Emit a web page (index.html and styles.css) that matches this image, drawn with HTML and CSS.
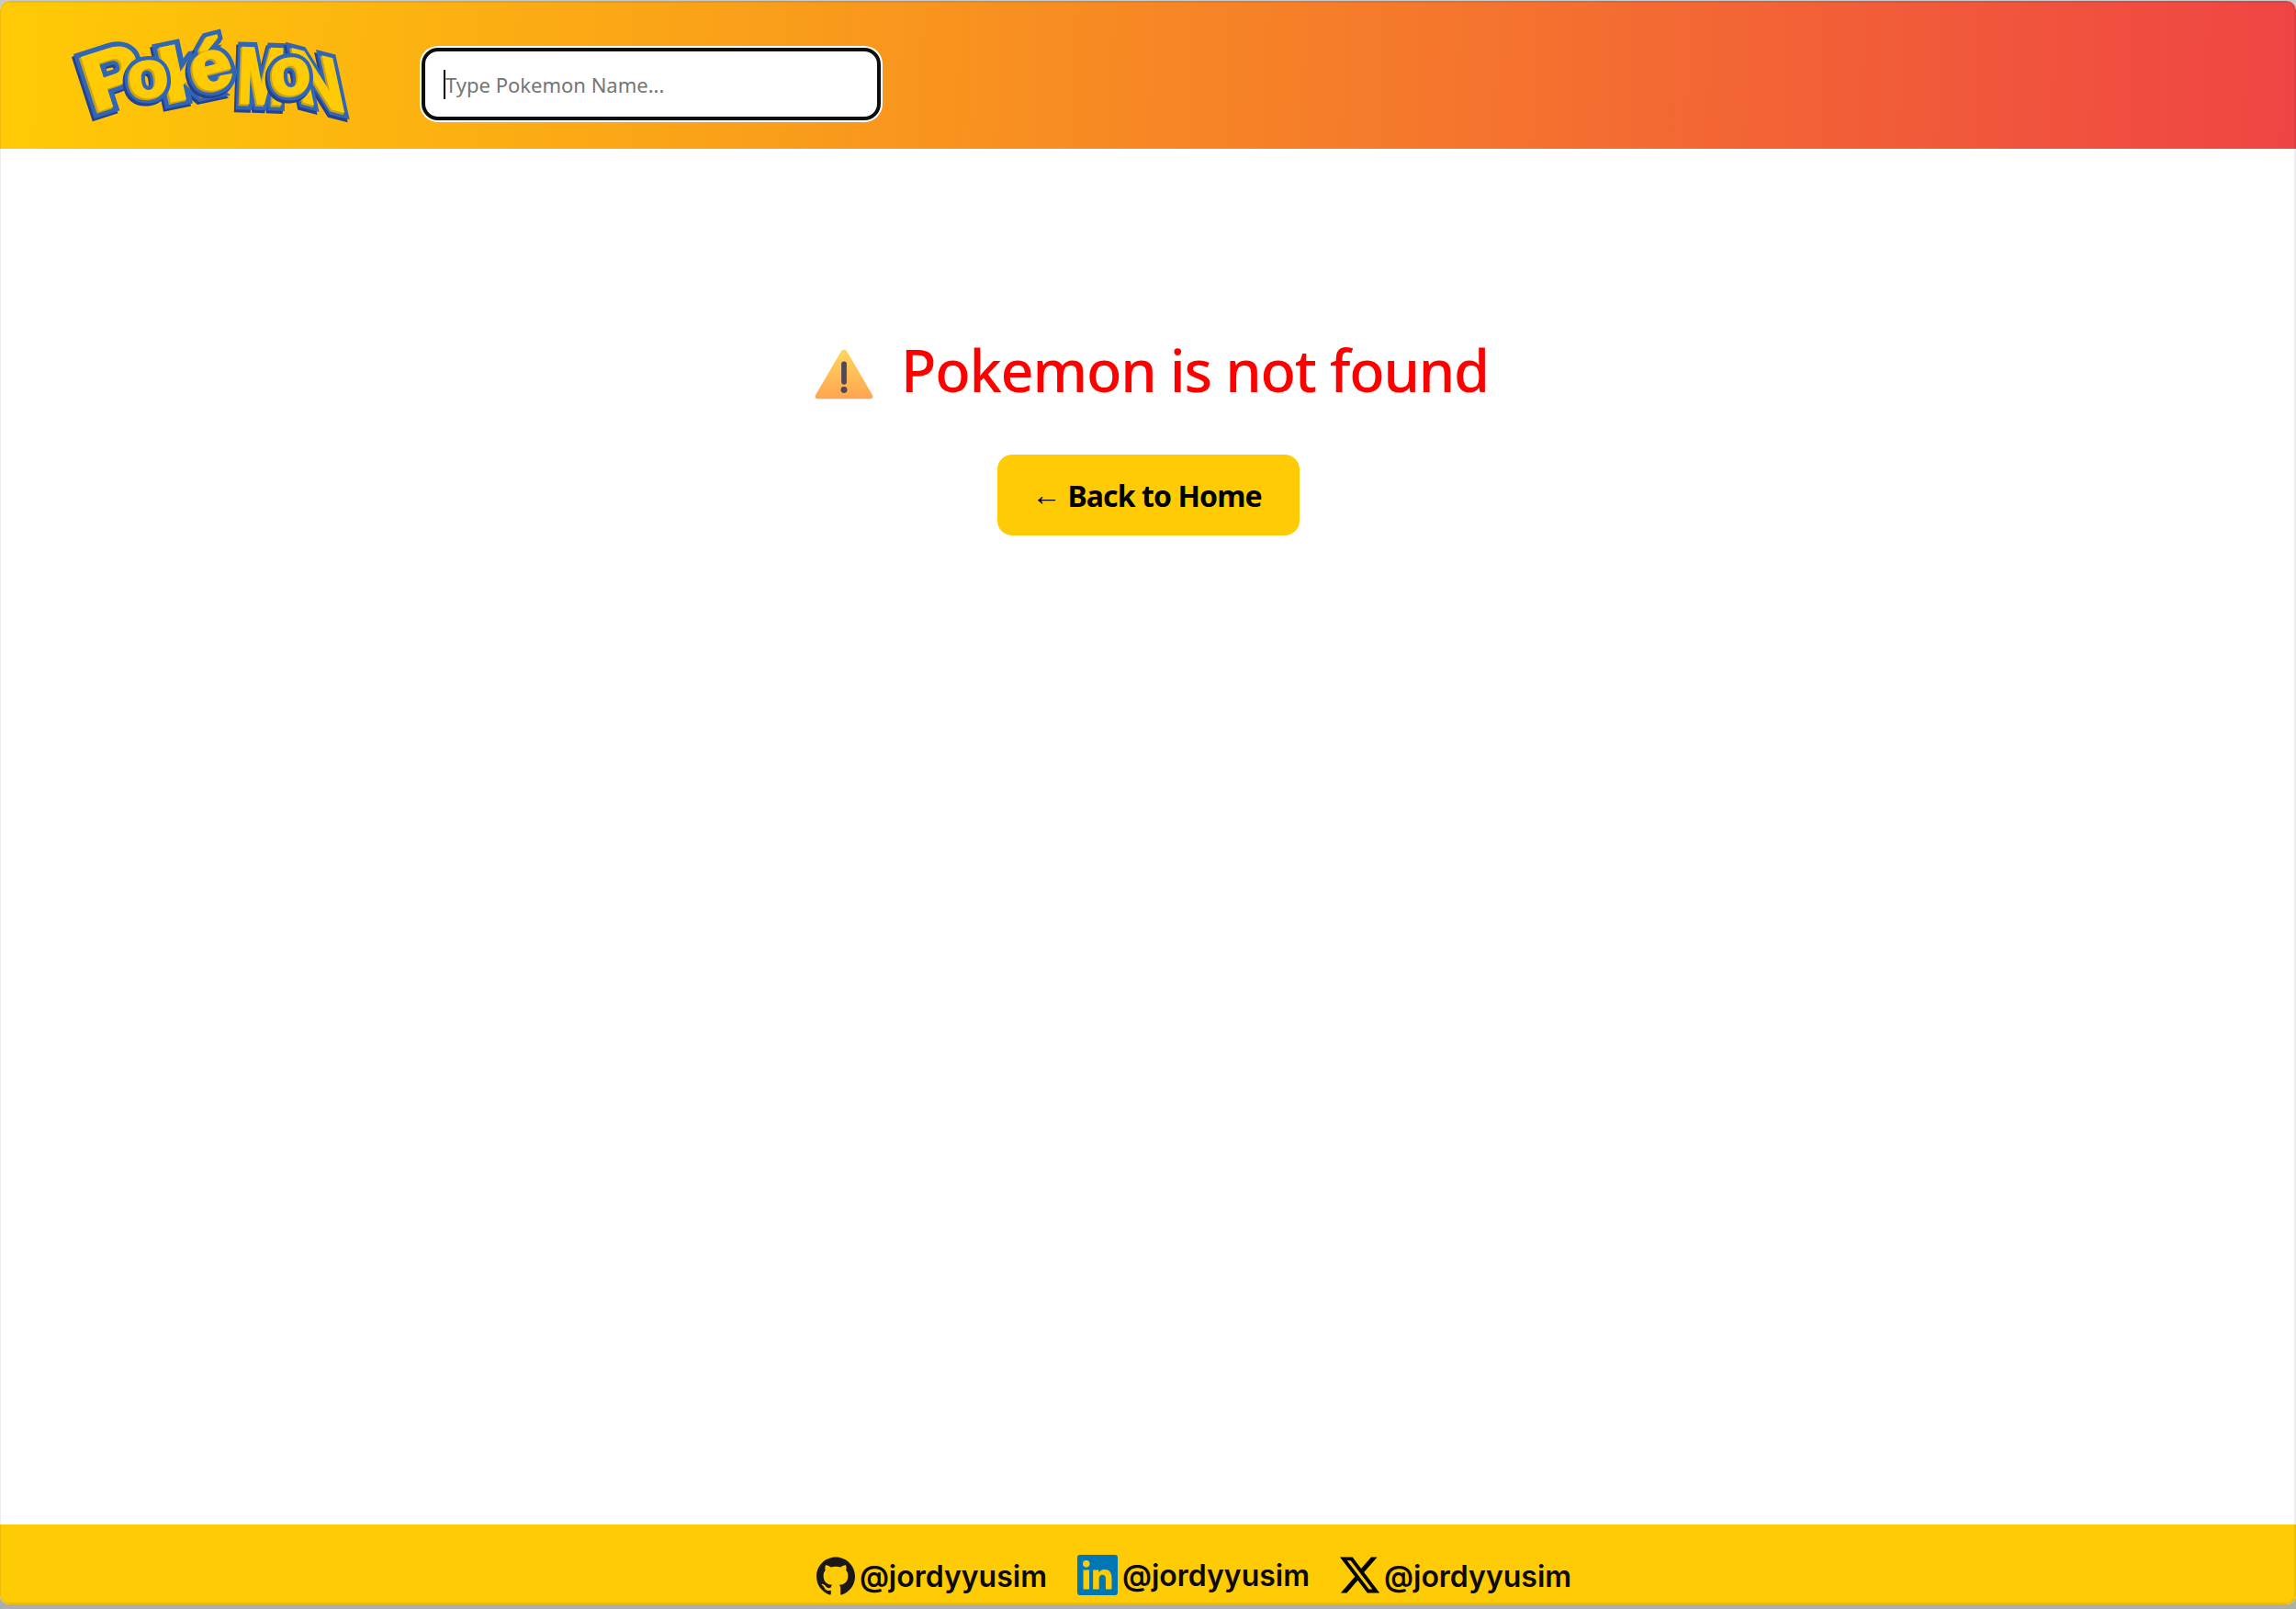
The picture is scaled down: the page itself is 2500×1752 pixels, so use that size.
FILE: index.html
```html
<!DOCTYPE html>
<html lang="en">
<head>
<meta charset="utf-8">
<title>Pokemon is not found</title>
<link rel="stylesheet" href="styles.css">
</head>
<body>
<div class="app">
  <header class="header">
    <svg class="logo" viewBox="0 0 300 100" aria-label="Pokémon" role="img">
      <defs>
        <text id="lp" transform="translate(22 90) rotate(-18) scale(1.3 1.2)" class="l">P</text>
        <text id="lo" transform="translate(61 76) rotate(-6)" class="l">o</text>
        <text id="lk" transform="translate(100 80) rotate(-12) scale(1.4 1.12)" class="l">k</text>
        <text id="le" transform="translate(133 70) rotate(-14) scale(1.12 1.05)" class="l">é</text>
        <text id="lm" transform="translate(178 80) rotate(2) scale(.85 1.2)" class="l">M</text>
        <text id="ln" transform="matrix(1 .25 .25 1.15 246 78)" class="l">N</text>
        <text id="lq" transform="translate(216 73) rotate(-6)" class="l">o</text>
      </defs>
      <g><use href="#lp" class="logo-edge"></use><use href="#lp" class="logo-gold"></use><use href="#lp" class="logo-fill"></use></g>
      <g><use href="#lk" class="logo-edge"></use><use href="#lk" class="logo-gold"></use><use href="#lk" class="logo-fill"></use></g>
      <g><use href="#lo" class="logo-edge"></use><use href="#lo" class="logo-gold"></use><use href="#lo" class="logo-fill"></use></g>
      <g><use href="#lm" class="logo-edge"></use><use href="#lm" class="logo-gold"></use><use href="#lm" class="logo-fill"></use></g>
      <g><use href="#le" class="logo-edge"></use><use href="#le" class="logo-gold"></use><use href="#le" class="logo-fill"></use></g>
      <g><use href="#ln" class="logo-edge"></use><use href="#ln" class="logo-gold"></use><use href="#ln" class="logo-fill"></use></g>
      <g><use href="#lq" class="logo-edge"></use><use href="#lq" class="logo-gold"></use><use href="#lq" class="logo-fill"></use></g>
    </svg>
    <div class="search">
      <input class="search-input" type="text" placeholder="Type Pokemon Name...">
      <span class="caret"></span>
    </div>
  </header>

  <main class="main">
    <h1 class="error-title">
      <svg class="warn" viewBox="0 0 66 56" aria-hidden="true">
        <defs>
          <linearGradient id="warnFill" x1="0" y1="0" x2="0" y2="1">
            <stop offset="0" stop-color="#ffd65c"></stop>
            <stop offset="1" stop-color="#ffa552"></stop>
          </linearGradient>
        </defs>
        <path d="M33 1 C35 1 36 2 37 4 L65 52 C66 54 65 56 63 56 L3 56 C1 56 0 54 1 52 L29 4 C30 2 31 1 33 1 Z" fill="url(#warnFill)"></path>
        <rect x="30" y="14" width="6" height="26" rx="3" fill="#50495a"></rect>
        <circle cx="33" cy="46" r="3.6" fill="#50495a"></circle>
      </svg>
      <span>Pokemon is not found</span>
    </h1>
    <a class="home-btn" href="#"><span class="arrow">←</span> Back to Home</a>
  </main>

  <footer class="footer">
    <a class="social" href="#">
      <svg class="social-icon icon-gh" viewBox="0 0 24 24" aria-hidden="true"><path fill="#1b1817" d="M12 .297c-6.63 0-12 5.373-12 12 0 5.303 3.438 9.8 8.205 11.385.6.113.82-.258.82-.577 0-.285-.01-1.04-.015-2.04-3.338.724-4.042-1.61-4.042-1.61C4.422 18.07 3.633 17.7 3.633 17.7c-1.087-.744.084-.729.084-.729 1.205.084 1.838 1.236 1.838 1.236 1.07 1.835 2.809 1.305 3.495.998.108-.776.417-1.305.76-1.605-2.665-.3-5.466-1.332-5.466-5.93 0-1.31.465-2.38 1.235-3.22-.135-.303-.54-1.523.105-3.176 0 0 1.005-.322 3.3 1.23.96-.267 1.98-.399 3-.405 1.02.006 2.04.138 3 .405 2.28-1.552 3.285-1.23 3.285-1.23.645 1.653.24 2.873.12 3.176.765.84 1.23 1.91 1.23 3.22 0 4.61-2.805 5.625-5.475 5.92.42.36.81 1.096.81 2.22 0 1.606-.015 2.896-.03 3.286 0 .315.21.69.825.57C20.565 22.092 24 17.592 24 12.297c0-6.627-5.373-12-12-12"></path></svg>
      <span>@jordyyusim</span>
    </a>
    <a class="social" href="#">
      <svg class="social-icon" viewBox="0 0 24 24" aria-hidden="true"><rect width="24" height="24" rx="1.6" fill="#0077b5"></rect><path fill="#ffcb05" d="M7.119 20.452H3.555V9h3.564zM5.337 7.433a2.062 2.062 0 110-4.125 2.062 2.062 0 010 4.125zM20.447 20.452h-3.554v-5.569c0-1.328-.027-3.037-1.852-3.037-1.853 0-2.136 1.445-2.136 2.939v5.667H9.351V9h3.414v1.561h.046c.477-.9 1.637-1.85 3.37-1.85 3.601 0 4.267 2.37 4.267 5.455v6.286z"></path></svg>
      <span>@jordyyusim</span>
    </a>
    <a class="social" href="#">
      <svg class="social-icon icon-x" viewBox="1.25 2.25 21.5 19.5" aria-hidden="true"><path fill="#000" d="M18.244 2.25h3.308l-7.227 8.26 8.502 11.24H16.17l-5.214-6.817L4.99 21.75H1.68l7.73-8.835L1.254 2.25H8.08l4.713 6.231zm-1.161 17.52h1.833L7.084 4.126H5.117z"></path></svg>
      <span>@jordyyusim</span>
    </a>
  </footer>
</div>
</body>
</html>
```

FILE: styles.css
```css
* { box-sizing: border-box; }

html, body { margin: 0; height: 100%; }

body {
  background: linear-gradient(180deg, #c6cacd, #acaeae);
  padding: 1px 0 5px 0;
  font-family: "Noto Sans", "Open Sans", sans-serif;
}

.app {
  height: 100%;
  display: flex;
  flex-direction: column;
  background: #fff;
  border-radius: 10px;
  overflow: hidden;
  position: relative;
}

.app::after {
  content: "";
  position: absolute;
  inset: 0;
  border: 2px solid rgba(0, 0, 0, .07);
  border-left-width: 1px;
  border-radius: 10px;
  pointer-events: none;
}

.header {
  height: 161px;
  flex: none;
  display: flex;
  align-items: center;
  gap: 77px;
  padding-left: 80px;
  background: linear-gradient(92deg, #ffcb05, #ef4444);
}

.logo { width: 300px; height: 100px; flex: none; overflow: visible; }

.l {
  font-family: "Liberation Sans", Arial, sans-serif;
  font-weight: 700;
  font-size: 72px;
  stroke-linejoin: miter;
  stroke-miterlimit: 2.5;
}

.logo-edge { fill: #2f66b5; stroke: #2f66b5; stroke-width: 12px; filter: drop-shadow(-2px 3px 0 #24408f); }
.logo-gold { fill: #c9a114; stroke: #c9a114; stroke-width: 3.5px; transform: translate(-1px, 1px); }
.logo-fill { fill: #ffcb05; stroke: #ffcb05; stroke-width: 2.5px; transform: translate(.5px, -.5px); }

.search {
  position: relative;
  margin-top: 19px;
  width: 504px;
  height: 83px;
  padding: 2px;
  background: #fff;
  border-radius: 20px;
}

.search-input {
  display: block;
  width: 100%;
  height: 100%;
  border: 4px solid #0d0f0e;
  border-radius: 18px;
  padding: 2px 20px 0 22px;
  background: #fff;
  font: 400 22px "Noto Sans", "Open Sans", sans-serif;
  outline: none;
}

.search-input::placeholder { color: #757575; opacity: 1; }

.caret {
  position: absolute;
  left: 26px;
  top: 26px;
  width: 2px;
  height: 32px;
  background: #000;
}

.main {
  flex: 1;
  display: flex;
  flex-direction: column;
  align-items: center;
  padding-top: 199px;
  gap: 50px;
}

.error-title {
  margin: 0;
  padding-left: 8px;
  display: flex;
  align-items: center;
  gap: 30px;
  height: 84px;
  color: #f00;
  font-size: 63px;
  font-weight: 500;
  letter-spacing: -1.2px;
  line-height: 84px;
}

.warn { width: 64px; height: 56px; flex: none; margin-top: 7px; }

.home-btn {
  display: flex;
  align-items: center;
  justify-content: center;
  gap: .25em;
  width: 329px;
  height: 88px;
  padding-right: 3px;
  background: #ffcb05;
  border-radius: 16px;
  color: #000;
  font-size: 32px;
  font-weight: 700;
  letter-spacing: -.9px;
  text-decoration: none;
}

.arrow { margin-top: -4px; font-weight: 400; }

.footer {
  height: 87px;
  flex: none;
  display: flex;
  justify-content: center;
  align-items: flex-end;
  gap: 33px;
  padding: 0 0 10px 100px;
  background: #ffcb05;
}

.social {
  display: flex;
  align-items: center;
  gap: 5px;
  color: #0c0a05;
  font: 600 32px "Inter", "Liberation Sans", sans-serif;
  text-decoration: none;
}

.social-icon { width: 44px; height: 44px; flex: none; }
.icon-gh { width: 42px; height: 42px; }
.icon-x { width: 43px; height: 40px; margin-bottom: 2px; }
```
